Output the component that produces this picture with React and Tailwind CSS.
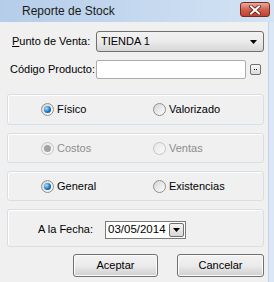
function Radio({ checked, disabled, label }) {
  return (
    <div className="flex items-center gap-[3px]">
      <span
        className={
          disabled
            ? "w-[13px] h-[13px] rounded-full border border-[#c4c4c4] bg-gradient-to-br from-[#e6e6e6] to-[#fbfbfb] flex items-center justify-center"
            : "w-[13px] h-[13px] rounded-full border border-[#8e8f8f] bg-gradient-to-br from-[#d4d4d4] to-[#ffffff] flex items-center justify-center"
        }
      >
        {checked && (
          <span
            className={
              disabled
                ? "w-[7px] h-[7px] rounded-full bg-[#a3a3a3]"
                : "w-[7px] h-[7px] rounded-full bg-[radial-gradient(circle_at_35%_35%,#a8e1ff,#1b74c0_55%,#0b3f78)]"
            }
          />
        )}
      </span>
      <span className={disabled ? "text-[#8d8d8d]" : "text-black"}>{label}</span>
    </div>
  );
}

function Group({ className, children }) {
  return (
    <div
      className={
        "w-[257px] rounded-[3px] border border-[#d5dfe5] shadow-[inset_1px_1px_0_#ffffff] flex items-center " +
        className
      }
    >
      {children}
    </div>
  );
}

function RadioRow({ a, b }) {
  return (
    <div className="flex items-center pl-[33px]">
      <div className="w-[112px]">
        <Radio {...a} />
      </div>
      <Radio {...b} />
    </div>
  );
}

export default function App() {
  return (
    <div
      className="w-[274px] h-[282px] bg-[#f0f0f0] flex flex-col overflow-hidden text-[11px] text-black"
      style={{ fontFamily: '"Liberation Sans", Arial, sans-serif' }}
    >
      {/* Title bar */}
      <div className="h-[22px] shrink-0 flex items-center justify-between bg-gradient-to-r from-[#b5cde9] to-[#d3e3f4] pl-[22px] pr-[4px]">
        <span className="text-[12px] text-[#1a1a1a]">Reporte de Stock</span>
        <div className="w-[30px] h-[15px] mt-[-3px] rounded-[3px] border border-[#7a2a22] bg-gradient-to-b from-[#e9a99c] via-[#d0624f] to-[#c3402f] flex items-center justify-center">
          <svg width="12" height="10" viewBox="0 0 12 10">
            <path d="M2 1.5 L10 8.5 M10 1.5 L2 8.5" stroke="#5b1a14" strokeWidth="3.6" strokeLinecap="square" />
            <path d="M2 1.5 L10 8.5 M10 1.5 L2 8.5" stroke="#ffffff" strokeWidth="2" strokeLinecap="square" />
          </svg>
        </div>
      </div>

      <div className="flex flex-1">
        <div className="w-[268px] flex flex-col pl-[7px]">
          {/* Punto de Venta */}
          <div className="mt-[9px] h-[21px] flex items-center">
            <span className="w-[89px] pl-[5px]">
              <span className="underline">P</span>unto de Venta:
            </span>
            <div className="w-[168px] h-[21px] rounded-[3px] border border-[#707070] bg-gradient-to-b from-[#f2f2f2] via-[#ebebeb] to-[#d6d6d6] flex items-center justify-between pl-[4px] pr-[6px]">
              <span>TIENDA 1</span>
              <svg width="7" height="4" viewBox="0 0 7 4">
                <path d="M0 0 H7 L3.5 4 Z" fill="#000" />
              </svg>
            </div>
          </div>

          {/* Código Producto */}
          <div className="mt-[8px] h-[19px] flex items-center">
            <span className="w-[89px] pl-[3px]">Código Producto:</span>
            <div className="w-[150px] h-[19px] rounded-[2px] border border-[#abadb3] bg-white" />
            <div className="ml-[4px] w-[11px] h-[11px] rounded-[2px] border border-[#707070] bg-gradient-to-b from-[#f6f6f6] to-[#dcdcdc] flex items-center justify-center gap-[1px]">
              <span className="w-[1px] h-[1px] bg-black" />
              <span className="w-[1px] h-[1px] bg-black" />
            </div>
          </div>

          <Group className="mt-[15px] h-[31px]">
            <RadioRow a={{ checked: true, label: "Físico" }} b={{ label: "Valorizado" }} />
          </Group>

          <Group className="mt-[8px] h-[30px]">
            <RadioRow
              a={{ checked: true, disabled: true, label: "Costos" }}
              b={{ disabled: true, label: "Ventas" }}
            />
          </Group>

          <Group className="mt-[8px] h-[30px]">
            <RadioRow a={{ checked: true, label: "General" }} b={{ label: "Existencias" }} />
          </Group>

          <Group className="mt-[8px] h-[38px]">
            <div className="flex items-center pl-[30px] pt-[3px]">
              <span className="w-[67px]">A la Fecha:</span>
              <div className="w-[81px] h-[18px] border border-[#7a7a7a] bg-white flex items-center justify-between pl-[2px] pr-[1px]">
                <span className="text-[11.5px]">03/05/2014</span>
                <div className="w-[15px] h-[14px] rounded-[2px] border border-[#707070] bg-gradient-to-b from-[#f4f4f4] to-[#d8d8d8] flex items-center justify-center">
                  <svg width="7" height="4" viewBox="0 0 7 4">
                    <path d="M0 0 H7 L3.5 4 Z" fill="#000" />
                  </svg>
                </div>
              </div>
            </div>
          </Group>

          {/* Buttons */}
          <div className="mt-[7px] flex pl-[66px] gap-[19px]">
            <button className="w-[85px] h-[23px] rounded-[3px] border border-[#707070] bg-gradient-to-b from-[#f2f2f2] via-[#ebebeb] to-[#cfcfcf] shadow-[inset_0_0_0_1px_#fcfcfc]">
              Aceptar
            </button>
            <button className="w-[87px] h-[23px] rounded-[3px] border border-[#707070] bg-gradient-to-b from-[#f2f2f2] via-[#ebebeb] to-[#cfcfcf] shadow-[inset_0_0_0_1px_#fcfcfc]">
              Cancelar
            </button>
          </div>
        </div>
        <div className="flex-1 bg-[#dbe7f5] border-l border-[#c3d4e8]" />
      </div>
    </div>
  );
}
